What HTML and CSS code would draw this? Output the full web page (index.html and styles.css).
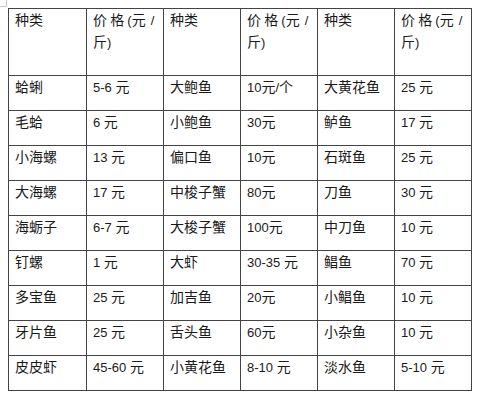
FILE: index.html
```html
<!DOCTYPE html>
<html lang="zh-CN">
<head>
<meta charset="utf-8">
<title>海鲜价格表</title>
<link rel="stylesheet" href="styles.css">
</head>
<body>
<div class="corner"></div>
<table class="price-table">
  <colgroup>
    <col class="c1"><col class="c"><col class="c"><col class="c"><col class="c"><col class="c">
  </colgroup>
  <tr class="head">
    <td>种类</td><td>价 格 <span class="num">(</span>元 <span class="num sl">/</span><br>斤<span class="num">)</span></td>
    <td>种类</td><td>价 格 <span class="num">(</span>元 <span class="num sl">/</span><br>斤<span class="num">)</span></td>
    <td>种类</td><td>价 格 <span class="num">(</span>元 <span class="num sl">/</span><br>斤<span class="num">)</span></td>
  </tr>
  <tr>
    <td>蛤蜊</td><td><span class="num">5-6 </span>元</td>
    <td>大鲍鱼</td><td><span class="num">10</span>元<span class="num">/</span>个</td>
    <td>大黄花鱼</td><td><span class="num">25 </span>元</td>
  </tr>
  <tr>
    <td>毛蛤</td><td><span class="num">6 </span>元</td>
    <td>小鲍鱼</td><td><span class="num">30</span>元</td>
    <td>鲈鱼</td><td><span class="num">17 </span>元</td>
  </tr>
  <tr>
    <td>小海螺</td><td><span class="num">13 </span>元</td>
    <td>偏口鱼</td><td><span class="num">10</span>元</td>
    <td>石斑鱼</td><td><span class="num">25 </span>元</td>
  </tr>
  <tr>
    <td>大海螺</td><td><span class="num">17 </span>元</td>
    <td>中梭子蟹</td><td><span class="num">80</span>元</td>
    <td>刀鱼</td><td><span class="num">30 </span>元</td>
  </tr>
  <tr>
    <td>海蛎子</td><td><span class="num">6-7 </span>元</td>
    <td>大梭子蟹</td><td><span class="num">100</span>元</td>
    <td>中刀鱼</td><td><span class="num">10 </span>元</td>
  </tr>
  <tr>
    <td>钉螺</td><td><span class="num">1 </span>元</td>
    <td>大虾</td><td><span class="num">30-35 </span>元</td>
    <td>鲳鱼</td><td><span class="num">70 </span>元</td>
  </tr>
  <tr>
    <td>多宝鱼</td><td><span class="num">25 </span>元</td>
    <td>加吉鱼</td><td><span class="num">20</span>元</td>
    <td>小鲳鱼</td><td><span class="num">10 </span>元</td>
  </tr>
  <tr>
    <td>牙片鱼</td><td><span class="num">25 </span>元</td>
    <td>舌头鱼</td><td><span class="num">60</span>元</td>
    <td>小杂鱼</td><td><span class="num">10 </span>元</td>
  </tr>
  <tr>
    <td>皮皮虾</td><td><span class="num">45-60 </span>元</td>
    <td>小黄花鱼</td><td><span class="num">8-10 </span>元</td>
    <td>淡水鱼</td><td><span class="num">5-10 </span>元</td>
  </tr>
</table>
</body>
</html>
```

FILE: styles.css
```css
html, body {
  margin: 0;
  padding: 0;
  background: #ffffff;
}
body {
  font-family: "Noto Sans CJK SC", "Liberation Sans", sans-serif;
  color: #1a1a1a;
}
.corner {
  width: 6px;
  height: 6px;
  border-right: 1px solid #c8c8c8;
  border-bottom: 1px solid #c8c8c8;
}
.price-table {
  margin-left: 8px;
  margin-top: 1px;
  border-collapse: collapse;
  table-layout: fixed;
  width: 463px;
}
.price-table col.c1 { width: 78px; }
.price-table col.c { width: 77px; }
.price-table td {
  border: 1px solid #444444;
  vertical-align: top;
  padding: 0 4px 0 6px;
  font-size: 14px;
  line-height: 20px;
  white-space: nowrap;
  overflow: visible;
}
.price-table tr { height: 35px; }
.price-table tr.head { height: 67px; }
.num {
  font-family: "Liberation Sans", sans-serif;
  font-size: 13px;
}
.sl {
  margin-left: 2px;
}
```
